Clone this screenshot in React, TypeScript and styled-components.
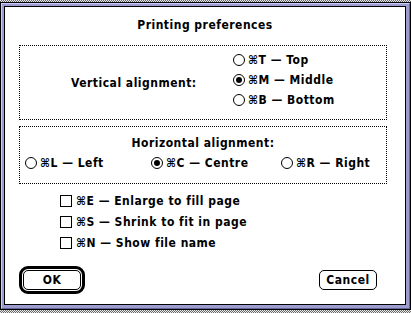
import React from 'react';
import styled, { createGlobalStyle } from 'styled-components';

const GlobalStyle = createGlobalStyle`
  html, body {
    margin: 0;
    padding: 0;
  }
  body {
    width: 411px;
    height: 313px;
    overflow: hidden;
    background: repeating-conic-gradient(#6a6a6a 0 25%, #e8e8e8 0 50%) 0 0 / 2px 2px;
    font-family: "DejaVu Sans Condensed", "DejaVu Sans", sans-serif;
    font-weight: bold;
    font-size: 12px;
    letter-spacing: 0.5px;
    color: #000;
  }
`;

const Desk = styled.div`
  padding-top: 2px;
  height: 313px;
  box-sizing: border-box;
`;

const Frame = styled.div`
  width: 411px;
  height: 308px;
  box-sizing: border-box;
  border: 1px solid #000;
  background: #000;
  display: flex;
`;

const ColorBand = styled.div`
  flex: 1;
  display: flex;
  border-style: solid;
  border-width: 1px;
  border-color: #ccccff #666699 #666699 #ccccff;
  background: #9c9cce;
  padding: 2px 3px 3px 2px;
`;

const Content = styled.div`
  flex: 1;
  background: #fff;
  border: 1px solid #000;
  display: flex;
  flex-direction: column;
  padding-left: 14px;
`;

const Title = styled.div`
  margin-top: 10px;
  margin-left: -14px;
  line-height: 16px;
  text-align: center;
`;

const Group = styled.div<{ $height: number; $mt: number }>`
  box-sizing: border-box;
  width: 368px;
  height: ${(p) => p.$height}px;
  margin-top: ${(p) => p.$mt}px;
  border: 1px dotted #000;
`;

const VerticalGrid = styled.div`
  display: grid;
  grid-template-columns: 162px auto;
  align-items: center;
  height: 100%;
  padding-left: 51px;
  box-sizing: border-box;
`;

const Label = styled.div`
  line-height: 16px;
`;

const RadioColumn = styled.div`
  display: flex;
  flex-direction: column;
  padding-top: 4px;
  align-self: start;
`;

const CenteredLabel = styled.div`
  margin-top: 8px;
  line-height: 16px;
  text-align: center;
`;

const RadioRow = styled.div`
  display: grid;
  grid-template-columns: 126px 130px auto;
  padding-left: 5px;
  margin-top: 2px;
`;

const Item = styled.div<{ $h?: number }>`
  display: flex;
  align-items: center;
  height: ${(p) => p.$h ?? 20}px;
  white-space: nowrap;
`;

const Circle = styled.span<{ $on?: boolean }>`
  box-sizing: border-box;
  width: 12px;
  height: 12px;
  border: 1px solid #000;
  border-radius: 50%;
  margin-right: 3px;
  flex: none;
  display: flex;
  align-items: center;
  justify-content: center;
  &::after {
    content: '';
    display: ${(p) => (p.$on ? 'block' : 'none')};
    width: 6px;
    height: 6px;
    border-radius: 50%;
    background: #000;
  }
`;

const Box = styled.span`
  box-sizing: border-box;
  width: 12px;
  height: 12px;
  border: 1px solid #000;
  margin-right: 4px;
  flex: none;
`;

const Checks = styled.div`
  display: flex;
  flex-direction: column;
  margin-top: 6px;
  padding-left: 41px;
`;

const Buttons = styled.div`
  display: flex;
  justify-content: space-between;
  align-items: center;
  margin-top: 13px;
  padding-right: 28px;
`;

const DefaultRing = styled.div`
  border: 3px solid #000;
  border-radius: 9px;
  padding: 1px;
`;

const Button = styled.button`
  box-sizing: border-box;
  width: 58px;
  height: 20px;
  border: 1px solid #000;
  border-radius: 5px;
  background: #fff;
  font: inherit;
  letter-spacing: 0.5px;
  color: #000;
  padding: 0;
  line-height: 18px;
  cursor: pointer;
`;

const verticalOptions = [
  { key: 'T', label: 'Top', on: false },
  { key: 'M', label: 'Middle', on: true },
  { key: 'B', label: 'Bottom', on: false },
];

const horizontalOptions = [
  { key: 'L', label: 'Left', on: false },
  { key: 'C', label: 'Centre', on: true },
  { key: 'R', label: 'Right', on: false },
];

const checkOptions = [
  { key: 'E', label: 'Enlarge to fill page' },
  { key: 'S', label: 'Shrink to fit in page' },
  { key: 'N', label: 'Show file name' },
];

export default function App() {
  return (
    <>
      <GlobalStyle />
      <Desk>
        <Frame>
          <ColorBand>
            <Content>
              <Title>Printing preferences</Title>

              <Group $height={75} $mt={12}>
                <VerticalGrid>
                  <Label>Vertical alignment:</Label>
                  <RadioColumn>
                    {verticalOptions.map((o) => (
                      <Item key={o.key}>
                        <Circle $on={o.on} />
                        {`⌘${o.key} — ${o.label}`}
                      </Item>
                    ))}
                  </RadioColumn>
                </VerticalGrid>
              </Group>

              <Group $height={58} $mt={6}>
                <CenteredLabel>Horizontal alignment:</CenteredLabel>
                <RadioRow>
                  {horizontalOptions.map((o) => (
                    <Item key={o.key}>
                      <Circle $on={o.on} />
                      {`⌘${o.key} — ${o.label}`}
                    </Item>
                  ))}
                </RadioRow>
              </Group>

              <Checks>
                {checkOptions.map((o) => (
                  <Item key={o.key} $h={21}>
                    <Box />
                    {`⌘${o.key} — ${o.label}`}
                  </Item>
                ))}
              </Checks>

              <Buttons>
                <DefaultRing>
                  <Button>OK</Button>
                </DefaultRing>
                <Button>Cancel</Button>
              </Buttons>
            </Content>
          </ColorBand>
        </Frame>
      </Desk>
    </>
  );
}
